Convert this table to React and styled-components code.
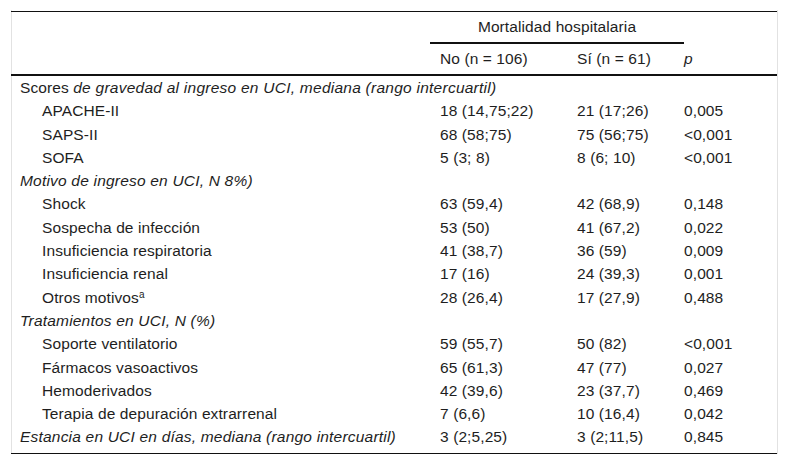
import React from "react";
import styled, { createGlobalStyle } from "styled-components";

const Global = createGlobalStyle`
  html, body { margin: 0; padding: 0; background: #fff; }
  body {
    font-family: "Liberation Sans", Arial, sans-serif;
    font-size: 15.5px;
    letter-spacing: 0.1px;
    color: #1e1e1e;
  }
`;

const Frame = styled.div`
  margin: 10px 0 0 11px;
  width: 765px;
  padding-top: 1px;
  border-left: 1px solid #e2e2e2;
  border-right: 1px solid #e2e2e2;
`;

const Table = styled.div`
  border-top: 1px solid #111;
  border-bottom: 1px solid #111;
  margin-left: -1px;
  width: 766px;
`;

const cols = "419px 137px 117px 1fr";

const HeadTop = styled.div`
  display: grid;
  grid-template-columns: ${cols};
  height: 32px;
`;

const SpanHead = styled.div`
  grid-column: 2 / 4;
  border-bottom: 2px solid #111;
  text-align: center;
  line-height: 30px;
`;

const HeadBottom = styled.div`
  display: grid;
  grid-template-columns: ${cols};
  height: 30px;
  line-height: 30px;
  border-bottom: 2px solid #111;
`;

const Body = styled.div`
  padding-bottom: 4px;
`;

const Row = styled.div`
  display: grid;
  grid-template-columns: ${cols};
  height: 23.3px;
  line-height: 23.3px;
  white-space: nowrap;
`;

const Label = styled.div`
  padding-left: ${(p) => (p.$indent ? "31px" : "9px")};
  font-style: ${(p) => (p.$italic ? "italic" : "normal")};
  letter-spacing: ${(p) => (p.$italic ? "0.2px" : "inherit")};
`;

const Cell = styled.div`
  padding-left: ${(p) => (p.$last ? "0" : "10px")};
  font-style: ${(p) => (p.$italic ? "italic" : "normal")};
`;

const Em = styled.i`
  font-style: italic;
  letter-spacing: 0.25px;
`;

const Sup = styled.sup`
  font-size: 10px;
  line-height: 0;
  vertical-align: 5px;
`;

const rows = [
  { label: <>Scores <Em>de gravedad al ingreso en UCI, mediana (rango intercuartil)</Em></> },
  { label: "APACHE-II", indent: true, v: ["18 (14,75;22)", "21 (17;26)", "0,005"] },
  { label: "SAPS-II", indent: true, v: ["68 (58;75)", "75 (56;75)", "<0,001"] },
  { label: "SOFA", indent: true, v: ["5 (3; 8)", "8 (6; 10)", "<0,001"] },
  { label: "Motivo de ingreso en UCI, N 8%)", italic: true },
  { label: "Shock", indent: true, v: ["63 (59,4)", "42 (68,9)", "0,148"] },
  { label: "Sospecha de infección", indent: true, v: ["53 (50)", "41 (67,2)", "0,022"] },
  { label: "Insuficiencia respiratoria", indent: true, v: ["41 (38,7)", "36 (59)", "0,009"] },
  { label: "Insuficiencia renal", indent: true, v: ["17 (16)", "24 (39,3)", "0,001"] },
  { label: <>Otros motivos<Sup>a</Sup></>, indent: true, v: ["28 (26,4)", "17 (27,9)", "0,488"] },
  { label: "Tratamientos en UCI, N (%)", italic: true },
  { label: "Soporte ventilatorio", indent: true, v: ["59 (55,7)", "50 (82)", "<0,001"] },
  { label: "Fármacos vasoactivos", indent: true, v: ["65 (61,3)", "47 (77)", "0,027"] },
  { label: "Hemoderivados", indent: true, v: ["42 (39,6)", "23 (37,7)", "0,469"] },
  { label: "Terapia de depuración extrarrenal", indent: true, v: ["7 (6,6)", "10 (16,4)", "0,042"] },
  { label: "Estancia en UCI en días, mediana (rango intercuartil)", italic: true, v: ["3 (2;5,25)", "3 (2;11,5)", "0,845"] },
];

export default function App() {
  return (
    <>
      <Global />
      <Frame>
        <Table>
          <HeadTop>
            <div />
            <SpanHead>Mortalidad hospitalaria</SpanHead>
            <div />
          </HeadTop>
          <HeadBottom>
            <div />
            <Cell>No (n = 106)</Cell>
            <Cell>Sí (n = 61)</Cell>
            <Cell $last $italic>p</Cell>
          </HeadBottom>
          <Body>
            {rows.map((r, i) => (
              <Row key={i}>
                <Label $indent={r.indent} $italic={r.italic}>{r.label}</Label>
                <Cell>{r.v ? r.v[0] : ""}</Cell>
                <Cell>{r.v ? r.v[1] : ""}</Cell>
                <Cell $last>{r.v ? r.v[2] : ""}</Cell>
              </Row>
            ))}
          </Body>
        </Table>
      </Frame>
    </>
  );
}
